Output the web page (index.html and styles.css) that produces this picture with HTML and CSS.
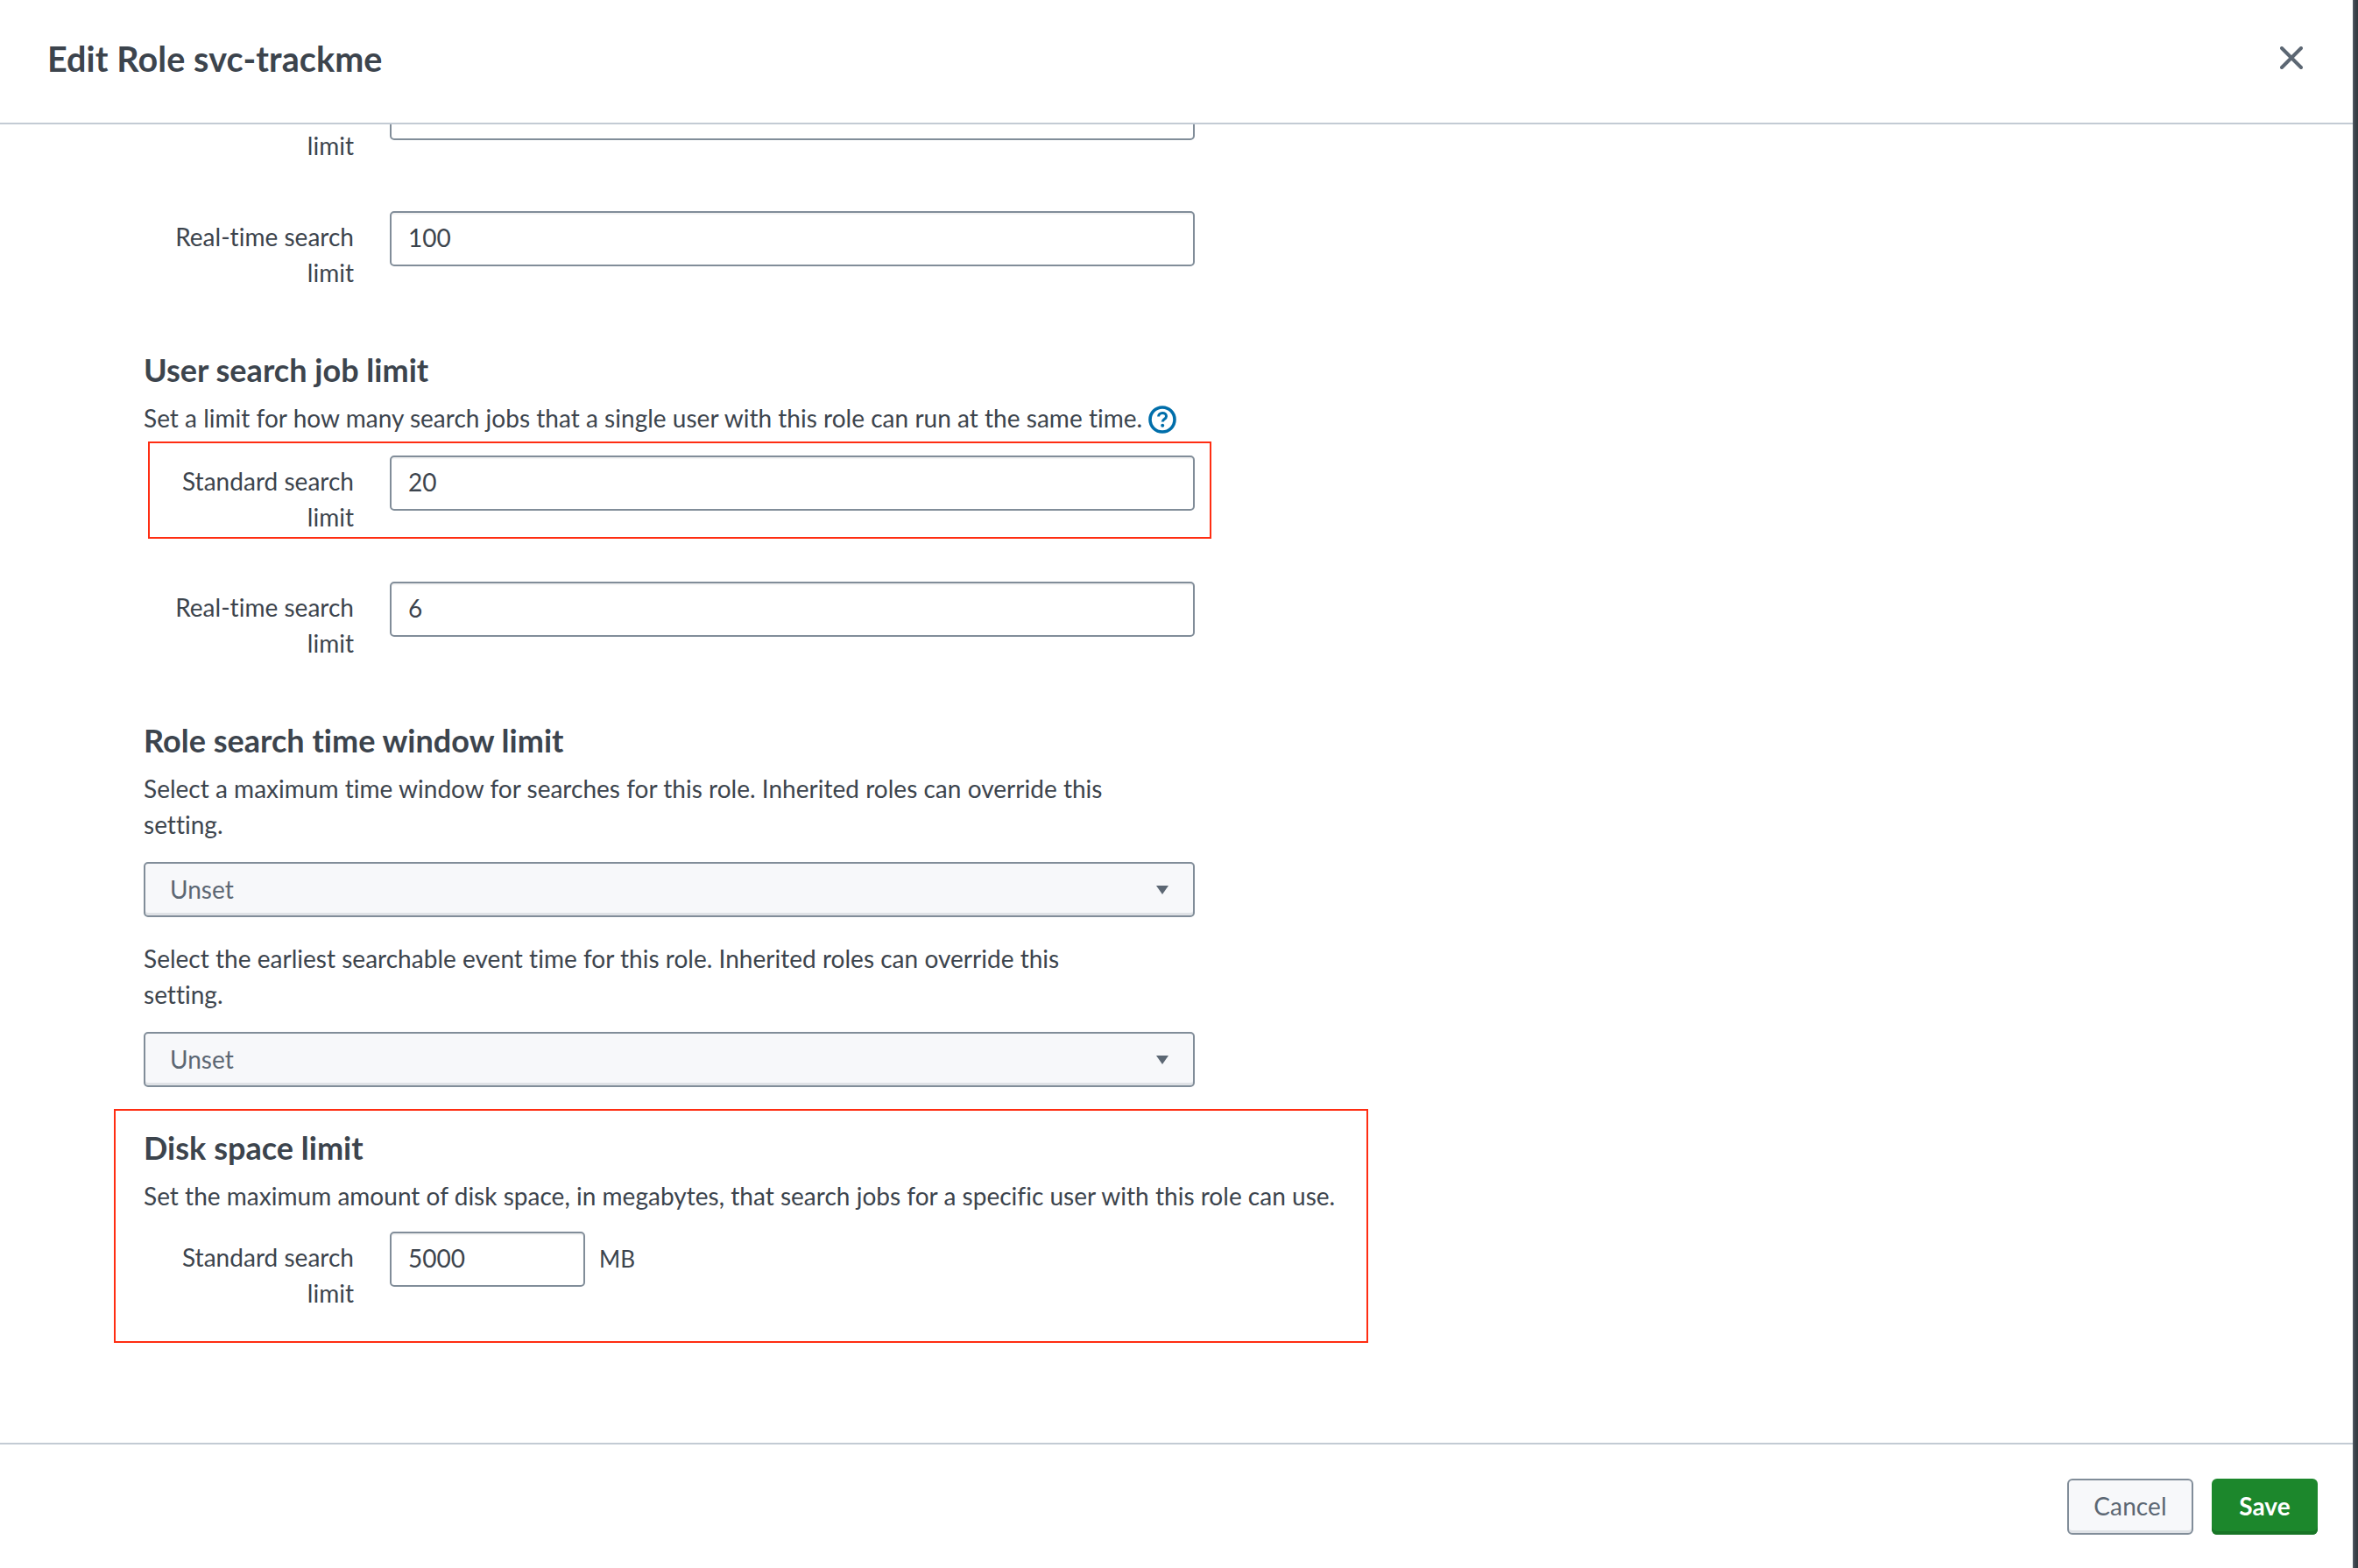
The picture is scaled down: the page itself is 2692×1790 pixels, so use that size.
FILE: index.html
```html
<!DOCTYPE html>
<html lang="en">
<head>
<meta charset="utf-8">
<title>Edit Role svc-trackme</title>
<link rel="stylesheet" href="styles.css">
</head>
<body>
<div class="modal">
  <header class="modal-header">
    <h1 class="modal-title">Edit Role svc-trackme</h1>
    <button class="close" aria-label="Close">
      <svg viewBox="0 0 26 26" width="26" height="26"><path d="M2 2 24 24M24 2 2 24" fill="none" stroke="#5c6773" stroke-width="4" stroke-linecap="round"/></svg>
    </button>
  </header>
  <main class="modal-body">
    <div class="content">
      <div class="row">
        <div class="row-label row-label-scrolled">limit</div>
        <div class="field"></div>
      </div>
      <div class="row">
        <div class="row-label">Real-time search limit</div>
        <div class="field">100</div>
      </div>

      <h2 class="section-title">User search job limit</h2>
      <p class="desc desc-wide desc-row">Set a limit for how many search jobs that a single user with this role can run at the same time.
        <svg class="help" viewBox="0 0 32 32" width="32" height="32"><circle cx="16" cy="16" r="14" fill="none" stroke="#006eaa" stroke-width="3.6"/><path d="M11.6 12.6c0-2.6 2-4.2 4.5-4.2s4.4 1.5 4.4 3.8c0 3.4-4.3 3.3-4.3 6.4" fill="none" stroke="#006eaa" stroke-width="3"/><circle cx="16.2" cy="22.8" r="2" fill="#006eaa"/></svg>
      </p>
      <div class="row annotated">
        <span class="annot annot-row"></span>
        <div class="row-label">Standard search limit</div>
        <div class="field">20</div>
      </div>
      <div class="row">
        <div class="row-label">Real-time search limit</div>
        <div class="field">6</div>
      </div>

      <h2 class="section-title">Role search time window limit</h2>
      <p class="desc desc-row">Select a maximum time window for searches for this role. Inherited roles can override this setting.</p>
      <div class="select"><span>Unset</span><i class="caret"></i></div>
      <p class="desc desc-gap">Select the earliest searchable event time for this role. Inherited roles can override this setting.</p>
      <div class="select"><span>Unset</span><i class="caret"></i></div>

      <section class="disk annotated">
        <span class="annot annot-disk"></span>
        <h2 class="section-title flush">Disk space limit</h2>
        <p class="desc desc-wide">Set the maximum amount of disk space, in megabytes, that search jobs for a specific user with this role can use.</p>
        <div class="row row-last">
          <div class="row-label">Standard search limit</div>
          <div class="inline-field">
            <div class="field field-small">5000</div>
            <span class="unit">MB</span>
          </div>
        </div>
      </section>
    </div>
  </main>
  <footer class="modal-footer">
    <button class="btn btn-cancel">Cancel</button>
    <button class="btn btn-save">Save</button>
  </footer>
</div>
<div class="scrollbar"></div>
</body>
</html>
```
FILE: styles.css
```css
* { box-sizing: border-box; }
html, body { margin: 0; height: 100%; }
body {
  display: flex;
  height: 1790px;
  overflow: hidden;
  background: #fff;
  color: #3c444d;
  font-family: Lato, "Open Sans", sans-serif;
  font-size: 28px;
  letter-spacing: 0.02px;
  line-height: 41px;
}
.modal { flex: 1; min-width: 0; display: flex; flex-direction: column; }
.scrollbar { width: 6px; background: linear-gradient(90deg, #5a626b, #3c444d 40%, #33393f); }

.modal-header {
  height: 142px;
  flex: none;
  display: flex;
  align-items: flex-start;
  justify-content: space-between;
  padding: 46px 57px 0 54px;
  border-bottom: 2px solid #c3cbd4;
}
.modal-title { margin: 0; font-size: 39.5px; line-height: 42px; font-weight: 700; letter-spacing: 0.1px; }
.close { border: 0; background: none; padding: 0; margin-top: 7px; width: 26px; height: 26px; display: block; }
.close svg { display: block; }

.modal-body { flex: 1; min-height: 0; overflow: hidden; }
.content { width: 1200px; margin: -45px 0 0 164px; }

.row {
  display: grid;
  grid-template-columns: 240px 1fr;
  column-gap: 41px;
  min-height: 91px;
  margin-bottom: 53px;
  align-items: start;
}
.row-label { text-align: right; padding-top: 9px; }
.row-label-scrolled { padding-top: 49px; }
.field {
  height: 63px;
  padding: 0 19px;
  border: 2px solid #818d99;
  border-radius: 5px;
  background: #fff;
  line-height: 56px;
  box-shadow: inset 0 2px 1px rgba(0,0,0,.05);
}
.section-title { margin: 70px 0 14px; font-size: 36px; line-height: 41px; font-weight: 700; }
.section-title.flush { margin-top: 0; }
.desc { margin: 0 0 20px; width: 1120px; }
.desc-row { margin-bottom: 22px; }
.desc-wide { width: auto; white-space: nowrap; }
.desc-gap { margin-top: 27px; margin-bottom: 22px; }
.help { vertical-align: -7px; }

.select {
  height: 63px;
  display: flex;
  align-items: center;
  justify-content: space-between;
  padding: 0 28px 0 28px;
  border: 2px solid #818d99;
  border-radius: 5px;
  background: #f7f8fa;
  color: #5c6773;
  box-shadow: inset 0 -3px 0 #dfe2e6;
}
.caret {
  width: 0; height: 0;
  border-style: solid;
  border-width: 10px 7.5px 0;
  border-color: #5c6773 transparent transparent;
}

.annotated { position: relative; }
.annot { position: absolute; border: 2px solid #ff2d12; pointer-events: none; }
.annot-row { left: 5px; top: -16px; width: 1214px; height: 111px; }
.annot-disk { left: -34px; top: -24px; width: 1432px; height: 267px; }

.disk { margin-top: 49px; }
.row-last { margin-bottom: 0; }
.inline-field { display: flex; align-items: flex-start; gap: 16px; }
.field-small { width: 223px; }
.unit { padding-top: 11px; font-size: 26px; }

.modal-footer {
  height: 143px;
  flex: none;
  display: flex;
  justify-content: flex-end;
  align-items: flex-start;
  gap: 21px;
  padding: 39px 40px 0 0;
  border-top: 2px solid #c3cbd4;
}
.btn {
  height: 64px;
  border-radius: 6px;
  font-family: inherit;
  font-size: 28px;
  letter-spacing: 0.1px;
  padding: 0 0 3px;
}
.btn-cancel {
  width: 144px;
  border: 2px solid #818d99;
  background: #f7f8fa;
  color: #5c6773;
  box-shadow: inset 0 -3px 0 #dfe2e6;
}
.btn-save {
  width: 121px;
  border: 0;
  background: #1c872c;
  color: #fff;
  font-weight: 700;
  box-shadow: inset 0 -4px 0 #187526;
}
```
